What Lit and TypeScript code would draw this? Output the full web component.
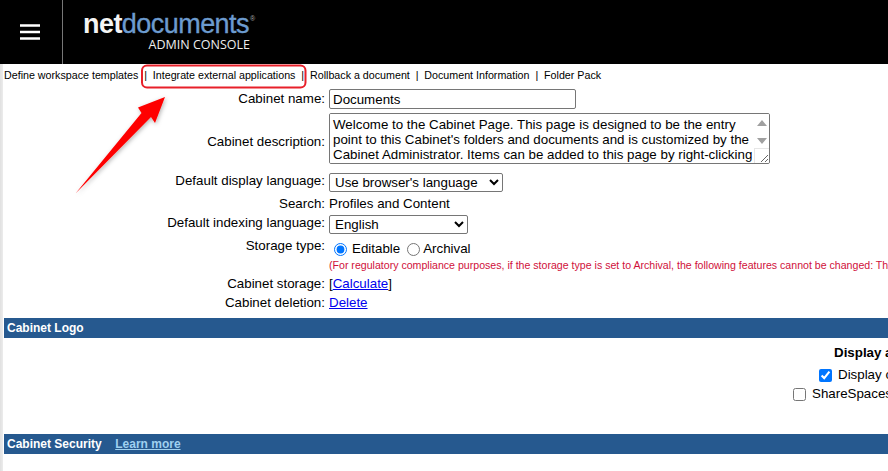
import { LitElement, html, css } from "lit";
import { customElement } from "lit/decorators.js";

const DESCRIPTION =
  "Welcome to the Cabinet Page. This page is designed to be the entry point to this Cabinet's folders and documents and is customized by the Cabinet Administrator. Items can be added to this page by right-clicking on them.";

@customElement("app-root")
export class AppRoot extends LitElement {
  static styles = css`
    :host { display: block; width: 888px; height: 471px; overflow: hidden; background: #fff; position: relative;
      font-family: "Liberation Sans", Arial, sans-serif; font-size: 13.33px; line-height: 16px; color: #000; }
    * { box-sizing: border-box; }
    .top { height: 64px; background: #000; display: flex; align-items: stretch; }
    .burger { width: 63px; border-right: 1px solid #777; display: flex; align-items: center; justify-content: center; padding-right: 2px; }
    .burger svg { display: block; }
    .logo { padding: 11px 0 0 20px; color: #fff; width: 190px; }
    .brand { font-family: "Liberation Sans", sans-serif; font-size: 27px; line-height: 27px; letter-spacing: -0.55px; display: flex; white-space: nowrap; }
    .brand b { font-weight: 700; color: #f4f4f4; }
    .brand span { color: #6c9bcf; -webkit-text-stroke: 0.35px #6c9bcf; }
    .brand sup { font-size: 7px; line-height: 10px; color: #aaa; letter-spacing: 0; margin: 3px 0 0 1px; }
    .sub { font-family: "Open Sans", sans-serif; font-size: 12.5px; line-height: 14px; text-align: right; padding-right: 3px; color: #eee; white-space: nowrap; }
    .main { position: relative; height: 407px; padding-left: 4px; background: linear-gradient(90deg, #e0e0e0 0, #ececec 3px, #fff 3px); }
    .nav { height: 22px; display: flex; align-items: center; font-size: 10.7px; white-space: nowrap; }
    .nav i { font-style: normal; padding: 0 5.9px; }
    .form { display: grid; grid-template-columns: 321px 1fr; column-gap: 4px; margin-top: 1px; white-space: nowrap; }
    .l { text-align: right; }
    input.text { width: 247px; height: 20px; margin: 2px 0 0 0; padding: 1px 3px; font: 13.33px "Liberation Sans", sans-serif; border: 1px solid #767676; border-radius: 2px; display: block; }
    .ta { position: relative; width: 441px; height: 51px; }
    textarea { width: 441px; height: 51px; padding: 3px 3px 1px; margin: 0; font: 13.33px/15.2px "Liberation Sans", sans-serif; border: 1px solid #767676; border-radius: 2px; display: block; resize: both; overflow-y: scroll; }
    textarea::-webkit-scrollbar { width: 17px; background: #fff; }
    textarea::-webkit-scrollbar-thumb { background: transparent; }
    .ta svg { position: absolute; right: 3px; top: 7px; pointer-events: none; }
    .grip { position: absolute; right: 1px; bottom: 1px; width: 15px; height: 15px; border-top: 1px solid #e6e6e6; border-left: 1px solid #e6e6e6; pointer-events: none; }
    select { font: 13.33px "Liberation Sans", sans-serif; height: 19px; border: 1px solid #767676; border-radius: 2px; background: #fff; padding: 0 0 0 1px; color: #000; display: block; }
    .sel1 { width: 174px; }
    .sel2 { width: 139px; }
    a { color: #0000ee; }
    .radio { display: flex; align-items: center; height: 20px; }
    .radio input { margin: 0 5px 0 5px; width: 13px; height: 13px; accent-color: #0075ff; }
    .radio input.second { margin: 0 3px 0 7px; }
    .warn { grid-column: 2; font-size: 10.6px; color: #d0103a; height: 15px; line-height: 13px; }
    .bar { background: #26598f; height: 20px; color: #fff; font-weight: 700; font-size: 12px; display: flex; align-items: center; padding-left: 3px; white-space: nowrap; }
    .bar a { color: #9fd0f0; margin-left: 13.5px; }
    .logo-body { height: 96px; position: relative; }
    .disp { position: absolute; top: 7px; left: 830px; font-weight: 700; white-space: nowrap; }
    .check { position: absolute; display: flex; align-items: center; white-space: nowrap; }
    .check input { margin: 0 6px 0 0; width: 13px; height: 13px; accent-color: #0075ff; }
    .arrow { position: absolute; left: 0; top: 0; pointer-events: none; }
  `;

  render() {
    return html`
      <div class="top">
        <div class="burger">
          <svg width="20" height="16" viewBox="0 0 20 16"><path d="M0 1.5h20M0 8h20M0 14.5h20" stroke="#fff" stroke-width="2.4"/></svg>
        </div>
        <div class="logo">
          <div class="brand"><b>net</b><span>documents</span><sup>®</sup></div>
          <div class="sub">ADMIN CONSOLE</div>
        </div>
      </div>
      <div class="main">
        <div class="nav">
          <span>Define workspace templates</span><i>|</i><span>Integrate external applications</span><i>|</i><span>Rollback a document</span><i>|</i><span>Document Information</span><i>|</i><span>Folder Pack</span>
        </div>
        <div class="form">
          <div class="l" style="padding-top:4px">Cabinet name:</div>
          <div><input class="text" value="Documents" /></div>
          <div class="l" style="padding-top:21px;margin-top:4px">Cabinet description:</div>
          <div style="margin-top:4px"><div class="ta"><textarea .value=${DESCRIPTION}></textarea>
            <svg width="10" height="24" viewBox="0 0 10 24"><path d="M5 0l5 6H0zM0 18h10L5 24z" fill="#a0a0a0"/></svg><div class="grip"></div></div></div>
          <div class="l" style="margin-top:9px">Default display language:</div>
          <div style="margin-top:9px"><select class="sel1"><option>Use browser's language</option></select></div>
          <div class="l" style="margin-top:4px">Search:</div>
          <div style="margin-top:4px">Profiles and Content</div>
          <div class="l" style="margin-top:3px">Default indexing language:</div>
          <div style="margin-top:3px"><select class="sel2"><option>English</option></select></div>
          <div class="l" style="margin-top:4px">Storage type:</div>
          <div class="radio" style="margin-top:5px"><input type="radio" name="s" checked />Editable<input class="second" type="radio" name="s" />Archival</div>
          <div></div>
          <div class="warn">(For regulatory compliance purposes, if the storage type is set to Archival, the following features cannot be changed: The</div>
          <div class="l" style="margin-top:2px">Cabinet storage:</div>
          <div style="margin-top:2px">[<a href="#">Calculate</a>]</div>
          <div class="l" style="margin-top:3px">Cabinet deletion:</div>
          <div style="margin-top:3px"><a href="#">Delete</a></div>
        </div>
        <div class="bar" style="margin-top:7px">Cabinet Logo</div>
        <div class="logo-body">
          <div class="disp">Display a</div>
          <label class="check" style="left:815px;top:29px"><input type="checkbox" checked />Display c</label>
          <label class="check" style="left:789px;top:48px"><input type="checkbox" />ShareSpaces</label>
        </div>
        <div class="bar">Cabinet Security <a href="#">Learn more</a></div>
      </div>
      <svg class="arrow" width="888" height="471" viewBox="0 0 888 471">
        <defs><filter id="s" x="-20%" y="-20%" width="140%" height="140%"><feDropShadow dx="1" dy="1.5" stdDeviation="2" flood-color="#000" flood-opacity=".3"/></filter></defs>
        <rect x="142" y="65.5" width="163.5" height="22" rx="5" fill="none" stroke="#e8202a" stroke-width="2"/>
        <path d="M75.5 193.5 L141.5 113 L138 107.5 L165 97 L155 123 L151 117 Z" fill="#fe0000" filter="url(#s)"/>
      </svg>
    `;
  }
}
